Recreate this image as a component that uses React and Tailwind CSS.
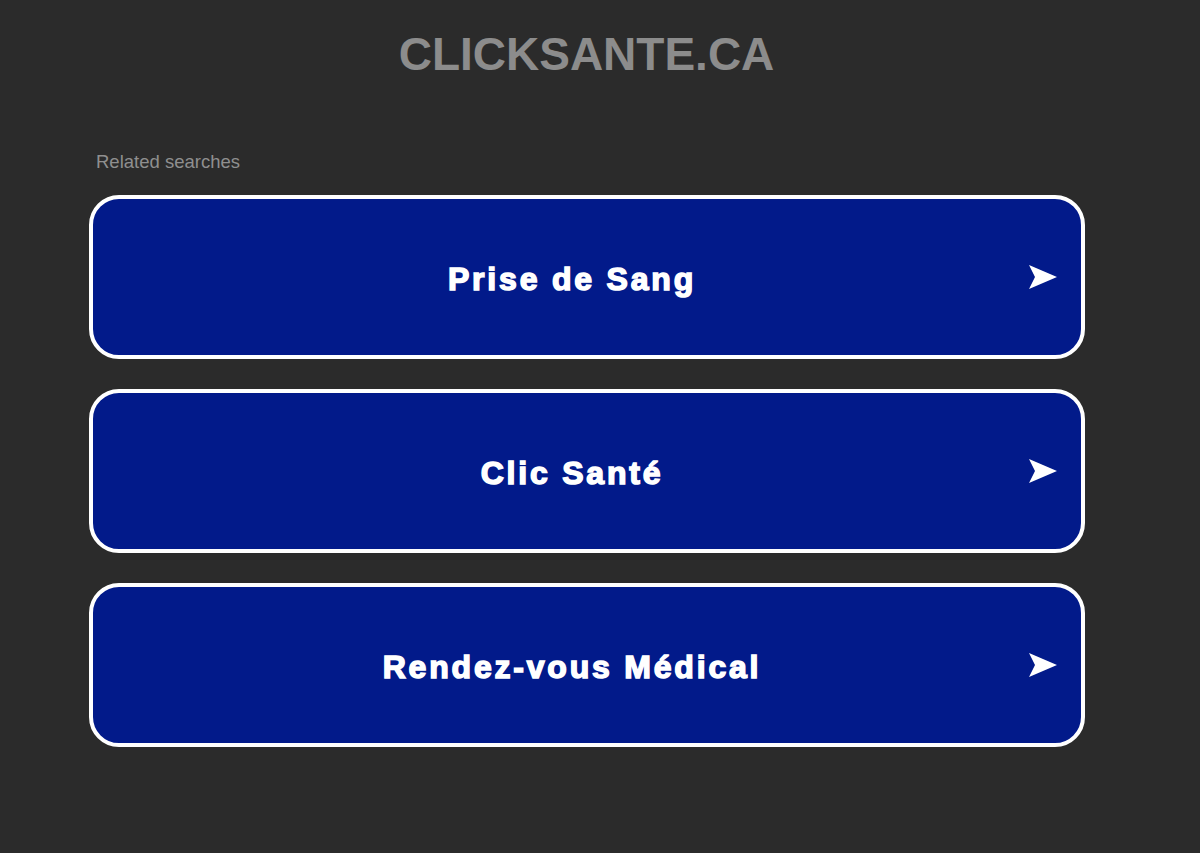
import React from 'react'

const LINKS = ['Prise de Sang', 'Clic Santé', 'Rendez-vous Médical']

export default function App() {
  return (
    <div className="min-h-[853px] bg-[#2b2b2b] font-['Liberation_Sans',Arial,sans-serif]">
      <div className="pt-[28px] text-center">
        <h1 className="pr-[27px] text-[46px] leading-[52px] font-bold text-[#8c8c8c]">CLICKSANTE.CA</h1>
      </div>
      <div className="mx-[89px] w-[996px] pt-[72px]">
        <div className="pl-[7px] text-[18.5px] leading-[20px] text-[#8f8f8f]">Related searches</div>
        <div className="mt-[23px] flex flex-col gap-[30px]">
          {LINKS.map((t) => (
            <a
              key={t}
              href="#"
              className="relative flex h-[164px] items-center justify-center rounded-[30px] border-[4px] border-white bg-[#021a8a] pr-[30px] pt-[3px]"
            >
              <span className="text-[32px] font-bold tracking-[2.8px] text-white [-webkit-text-stroke:1.5px_white]">{t}</span>
              <svg
                className="absolute right-[23px] top-1/2 -translate-y-1/2"
                width="30"
                height="26"
                viewBox="0 0 30 26"
              >
                <path d="M1 1 L29 13 L1 25 L7 13 Z" fill="white" />
              </svg>
            </a>
          ))}
        </div>
      </div>
    </div>
  )
}
